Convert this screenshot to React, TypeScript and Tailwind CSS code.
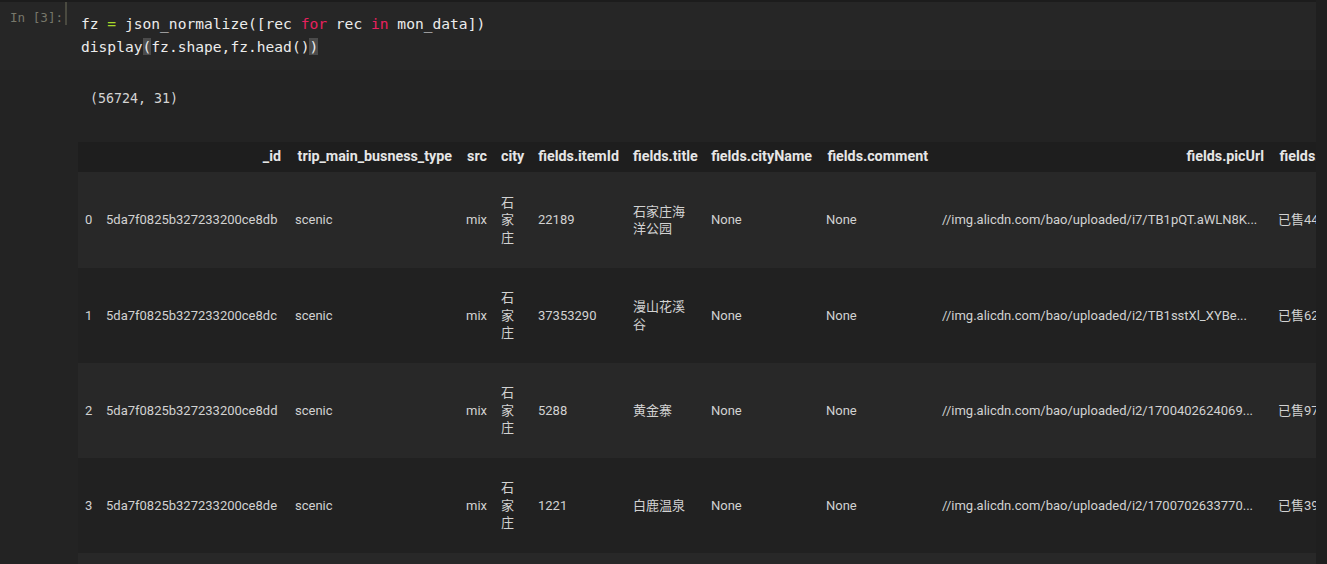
import React from "react";

const rows = [
  { i: "0", id: "5da7f0825b327233200ce8db", t: "scenic", src: "mix", city: "石家庄", item: "22189", title: "石家庄海洋公园", cn: "None", cm: "None", url: "//img.alicdn.com/bao/uploaded/i7/TB1pQT.aWLN8K...", last: "已售4432笔" },
  { i: "1", id: "5da7f0825b327233200ce8dc", t: "scenic", src: "mix", city: "石家庄", item: "37353290", title: "漫山花溪谷", cn: "None", cm: "None", url: "//img.alicdn.com/bao/uploaded/i2/TB1sstXl_XYBe...", last: "已售6215笔" },
  { i: "2", id: "5da7f0825b327233200ce8dd", t: "scenic", src: "mix", city: "石家庄", item: "5288", title: "黄金寨", cn: "None", cm: "None", url: "//img.alicdn.com/bao/uploaded/i2/1700402624069...", last: "已售9718笔" },
  { i: "3", id: "5da7f0825b327233200ce8de", t: "scenic", src: "mix", city: "石家庄", item: "1221", title: "白鹿温泉", cn: "None", cm: "None", url: "//img.alicdn.com/bao/uploaded/i2/1700702633770...", last: "已售3987笔" },
  { i: "4", id: "5da7f0825b327233200ce8df", t: "scenic", src: "mix", city: "石家庄", item: "4410", title: "西柏坡", cn: "None", cm: "None", url: "//img.alicdn.com/bao/uploaded/i3/1700711120330...", last: "已售1200笔" },
];

const td = "px-[7px] text-left align-middle";

export default function App() {
  return (
    <div className="w-[1327px] h-[564px] overflow-hidden bg-[#232323] flex">
      <div className="w-[1316px] flex flex-col shrink-0">
        <div className="h-[2px] bg-[#1c1c1c]" />
        <div className="h-[68px] bg-[#262626] flex">
          <div
            className="w-[65px] pl-[10px] pt-[8px] text-[12.6px] leading-[16px] text-[#77776a]"
            style={{ fontFamily: '"DejaVu Sans Mono", monospace' }}
          >
            In [3]:
          </div>
          <div className="w-[2px] h-[23px] bg-[#4a4a40]" />
          <div
            className="pl-[14px] pt-[11px] text-[14.6px] leading-[22.5px] text-[#ececec] whitespace-pre"
            style={{ fontFamily: '"DejaVu Sans Mono", monospace' }}
          >
            <div>
              fz <span className="text-[#a6d829]">=</span> json_normalize([rec{" "}
              <span className="text-[#e8215f]">for</span> rec{" "}
              <span className="text-[#e8215f]">in</span> mon_data])
            </div>
            <div>
              display<span className="bg-[#4b4b4b]">(</span>fz.shape,fz.head()
              <span className="bg-[#4b4b4b]">)</span>
            </div>
          </div>
        </div>
        <div
          className="pl-[90px] mt-[21px] h-[16px] text-[13.3px] leading-[16px] text-[#d4d4d4] whitespace-pre"
          style={{ fontFamily: '"DejaVu Sans Mono", monospace' }}
        >
          (56724, 31)
        </div>
        <div className="ml-[78px] mt-[35px] overflow-hidden flex-1">
          <table
            className="table-fixed border-collapse w-[1337px] text-[13px] text-[#d2d2d2]"
            style={{ fontFamily: 'Roboto, "Noto Sans CJK SC", sans-serif' }}
          >
            <thead>
              <tr className="h-[30px] bg-[#1e1e1e] text-[#e6e6e6] text-[14.3px] font-bold whitespace-nowrap">
                <th className="w-[21px] px-[7px] text-right"></th>
                <th className="w-[189px] px-[7px] text-right">_id</th>
                <th className="w-[171px] px-[7px] text-right">trip_main_busness_type</th>
                <th className="w-[35px] px-[7px] text-right">src</th>
                <th className="w-[37px] px-[7px] text-right">city</th>
                <th className="w-[95px] px-[7px] text-right">fields.itemId</th>
                <th className="w-[78px] px-[7px] text-right">fields.title</th>
                <th className="w-[115px] px-[7px] text-right">fields.cityName</th>
                <th className="w-[116px] px-[7px] text-right">fields.comment</th>
                <th className="w-[336px] px-[7px] text-right">fields.picUrl</th>
                <th className="w-[158px] px-[7px] text-right">fields.soldRecentNum</th>
              </tr>
            </thead>
            <tbody className="leading-[17.5px]">
              {rows.map((r, k) => (
                <tr key={r.i} className={(k === 0 ? "h-[96px] " : "h-[95px] ") + (k % 2 === 0 ? "bg-[#282828]" : "bg-[#212121]")}>
                  <td className={td}>{r.i}</td>
                  <td className={td}>{r.id}</td>
                  <td className={td}>{r.t}</td>
                  <td className={td}>{r.src}</td>
                  <td className={td}>{r.city}</td>
                  <td className={td}>{r.item}</td>
                  <td className={td}>{r.title}</td>
                  <td className={td}>{r.cn}</td>
                  <td className={td}>{r.cm}</td>
                  <td className={td + " whitespace-nowrap"}>{r.url}</td>
                  <td className={td + " whitespace-nowrap"}>{r.last}</td>
                </tr>
              ))}
            </tbody>
          </table>
        </div>
      </div>
      <div className="flex-1 bg-[#1f1f1f]" />
    </div>
  );
}
